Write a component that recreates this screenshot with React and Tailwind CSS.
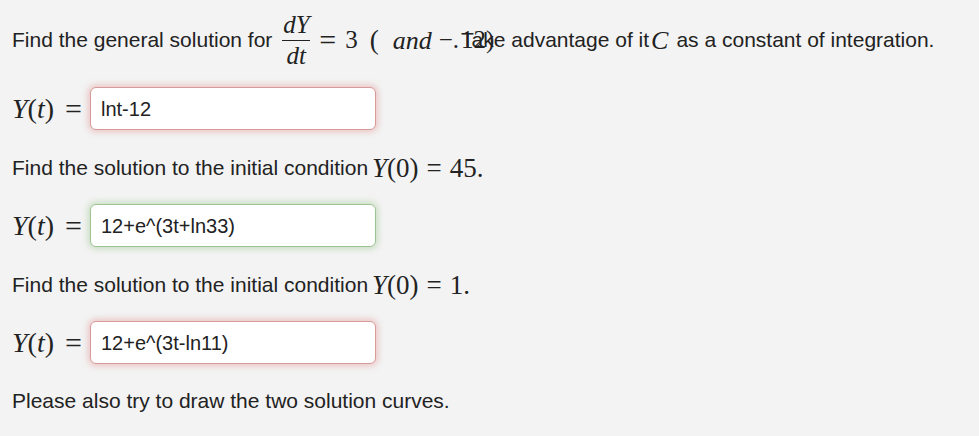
const M = "font-['Liberation_Serif','DejaVu_Serif',serif]";

const AnswerRow = ({ value, tone }) => {
  const ring =
    tone === 'green'
      ? 'border-[#9cc493] shadow-[0_0_6px_2px_rgba(120,180,100,0.35)]'
      : 'border-[#d99a9a] shadow-[0_0_6px_2px_rgba(220,110,110,0.35)]';
  return (
    <div className="flex items-center h-[43px]">
      <span className={`${M} text-[28px] w-[78px] flex items-center`}>
        <i>Y</i>(<i>t</i>)<span className="ml-[11px] text-[30px]">=</span>
      </span>
      <div className={`w-[286px] h-[43px] bg-white rounded-[6px] border flex items-center pl-[10px] text-[20px] ${ring}`}>
        {value}
      </div>
    </div>
  );
};

export default function App() {
  return (
    <div className="min-h-screen w-[979px] h-[436px] bg-[#f3f3f3] text-[#222] font-['Liberation_Sans',Arial,sans-serif] text-[21px] pl-[12px] pt-[9px]">
      <div className="flex items-center h-[62px] whitespace-nowrap">
        <span>Find the general solution for</span>
        <span className={`${M} inline-flex flex-col items-center ml-[10px] text-[25px] leading-[24px]`}>
          <span className="italic">dY</span>
          <span className="block w-[28px] h-px bg-[#222] my-[3px]" />
          <span className="italic">dt</span>
        </span>
        <span className={`${M} text-[30px] leading-none ml-[9px]`}>=</span>
        <span className={`${M} text-[25px] ml-[9px]`}>3</span>
        <span className={`${M} text-[27px] ml-[12px]`}>(</span>
        <span className={`${M} text-[26px] ml-[14px] italic`}>and</span>
        <span className={`${M} text-[25px] ml-[7px]`}>−</span>
        <span className={`${M} text-[25px]`}>.</span>
        <span className="inline-block w-0 overflow-visible">
          <span className={`${M} text-[25px] ml-[2px]`}>12)</span>
        </span>
        <span className="ml-[2px]">Take advantage of it</span>
        <span className={`${M} text-[26px] italic ml-[2px]`}>C</span>
        <span className="ml-[8px]">as a constant of integration.</span>
      </div>

      <div className="mt-[16px]">
        <AnswerRow value="lnt-12" tone="red" />
      </div>

      <div className="mt-[24px] h-[28px] flex items-center">
        <span>Find the solution to the initial condition</span>
        <span className={`${M} text-[27px] ml-[4px]`}>
          <i>Y</i>(0)<span className="mx-[8px]">=</span>45.
        </span>
      </div>

      <div className="mt-[22px]">
        <AnswerRow value="12+e^(3t+ln33)" tone="green" />
      </div>

      <div className="mt-[24px] h-[28px] flex items-center">
        <span>Find the solution to the initial condition</span>
        <span className={`${M} text-[27px] ml-[4px]`}>
          <i>Y</i>(0)<span className="mx-[8px]">=</span>1.
        </span>
      </div>

      <div className="mt-[22px]">
        <AnswerRow value="12+e^(3t-ln11)" tone="red" />
      </div>

      <div className="mt-[21px]">Please also try to draw the two solution curves.</div>
    </div>
  );
}
